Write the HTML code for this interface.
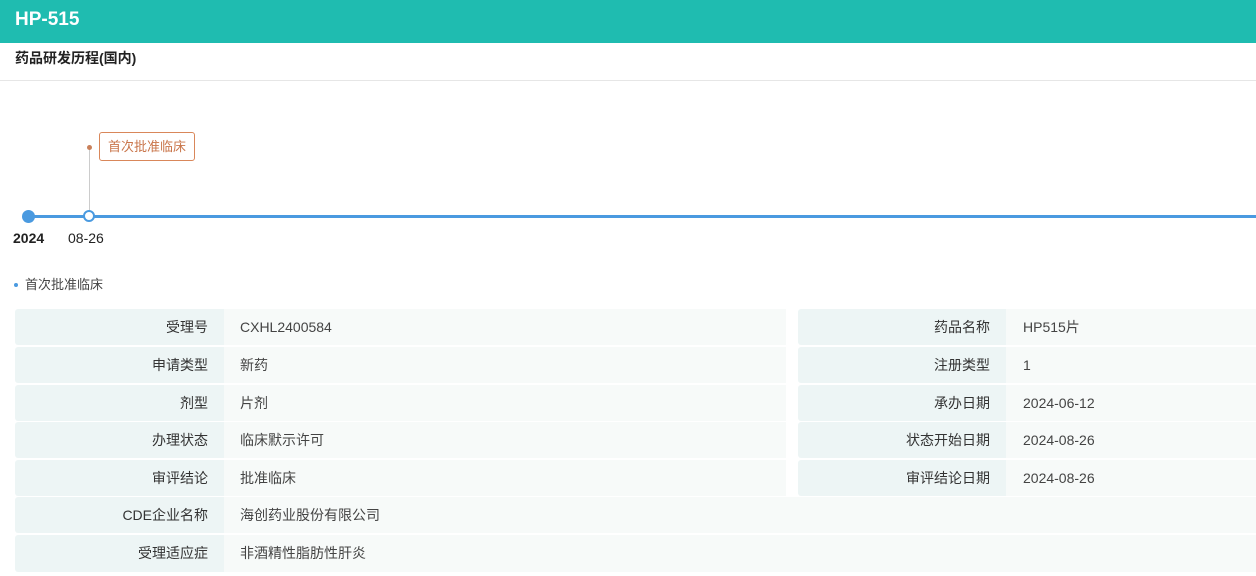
<!DOCTYPE html>
<html><head><meta charset="utf-8"><style>
body{margin:0;width:1256px;height:576px;overflow:hidden;background:#fff;font-family:"Liberation Sans","Noto Sans CJK SC",sans-serif;position:relative;color:#333}
.a{position:absolute}
.hd{left:0;top:0;width:1256px;height:43px;background:#1fbcb0}
.row{position:absolute;height:36px;font-size:14px;line-height:36px}
.l{position:absolute;background:#edf5f5;text-align:right;border-radius:3px 0 0 3px;color:#333}
.v{position:absolute;background:#f7faf9;color:#444}
</style></head><body>
<div class="a hd"></div>
<div class="a" style="left:15px;top:7px;font-size:19px;font-weight:bold;color:#fff;line-height:26px">HP-515</div>
<div class="a" style="left:15px;top:48px;font-size:14px;font-weight:bold;color:#222;line-height:20px">药品研发历程(国内)</div>
<div class="a" style="left:0;top:80px;width:1256px;height:1px;background:#e6e6e6"></div>
<div class="a" style="left:28px;top:215px;width:1228px;height:3px;background:#4a9ae0"></div>
<div class="a" style="left:22px;top:210px;width:13px;height:13px;border-radius:50%;background:#4a9ae0"></div>
<div class="a" style="left:89px;top:148px;width:1px;height:63px;background:#ccc"></div>
<div class="a" style="left:87px;top:145px;width:5px;height:5px;border-radius:50%;background:#c9805a"></div>
<div class="a" style="left:83px;top:210px;width:8px;height:8px;border-radius:50%;background:#fff;border:2.5px solid #4a9ae0"></div>
<div class="a" style="left:99px;top:132px;width:94px;height:27px;border:1px solid #d9875a;border-radius:3px;color:#c9754a;font-size:13px;line-height:27px;text-align:center">首次批准临床</div>
<div class="a" style="left:13px;top:228px;font-size:14px;font-weight:bold;color:#222;line-height:20px">2024</div>
<div class="a" style="left:68px;top:228px;font-size:14px;color:#222;line-height:20px">08-26</div>
<div class="a" style="left:14px;top:283px;width:4px;height:4px;border-radius:50%;background:#4a9ae0"></div>
<div class="a" style="left:25px;top:276px;font-size:13px;color:#444;line-height:18px">首次批准临床</div>

<div class="row" style="top:309px"><div class="l" style="left:15px;width:193px;padding-right:16px;height:36px">受理号</div><div class="v" style="left:224px;width:546px;padding-left:16px;height:36px">CXHL2400584</div><div class="l" style="left:798px;width:192px;padding-right:16px;height:36px">药品名称</div><div class="v" style="left:1006px;width:234px;padding-left:17px;height:36px">HP515片</div></div>
<div class="row" style="top:347px"><div class="l" style="left:15px;width:193px;padding-right:16px;height:36px">申请类型</div><div class="v" style="left:224px;width:546px;padding-left:16px;height:36px">新药</div><div class="l" style="left:798px;width:192px;padding-right:16px;height:36px">注册类型</div><div class="v" style="left:1006px;width:234px;padding-left:17px;height:36px">1</div></div>
<div class="row" style="top:385px"><div class="l" style="left:15px;width:193px;padding-right:16px;height:36px">剂型</div><div class="v" style="left:224px;width:546px;padding-left:16px;height:36px">片剂</div><div class="l" style="left:798px;width:192px;padding-right:16px;height:36px">承办日期</div><div class="v" style="left:1006px;width:234px;padding-left:17px;height:36px">2024-06-12</div></div>
<div class="row" style="top:422px"><div class="l" style="left:15px;width:193px;padding-right:16px;height:36px">办理状态</div><div class="v" style="left:224px;width:546px;padding-left:16px;height:36px">临床默示许可</div><div class="l" style="left:798px;width:192px;padding-right:16px;height:36px">状态开始日期</div><div class="v" style="left:1006px;width:234px;padding-left:17px;height:36px">2024-08-26</div></div>
<div class="row" style="top:460px"><div class="l" style="left:15px;width:193px;padding-right:16px;height:36px">审评结论</div><div class="v" style="left:224px;width:546px;padding-left:16px;height:36px">批准临床</div><div class="l" style="left:798px;width:192px;padding-right:16px;height:36px">审评结论日期</div><div class="v" style="left:1006px;width:234px;padding-left:17px;height:36px">2024-08-26</div></div>
<div class="row" style="top:497px"><div class="l" style="left:15px;width:193px;padding-right:16px;height:36px">CDE企业名称</div><div class="v" style="left:224px;width:1016px;padding-left:16px;height:36px">海创药业股份有限公司</div></div>
<div class="row" style="top:535px"><div class="l" style="left:15px;width:193px;padding-right:16px;height:37px">受理适应症</div><div class="v" style="left:224px;width:1016px;padding-left:16px;height:37px">非酒精性脂肪性肝炎</div></div>
</body></html>
